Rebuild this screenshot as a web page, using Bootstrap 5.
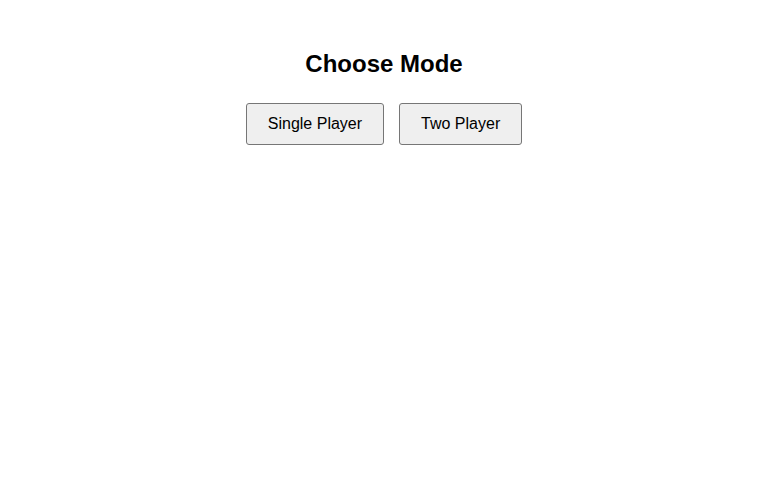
<!DOCTYPE html>
<html lang="en">
<head>
<meta charset="utf-8">
<meta name="viewport" content="width=device-width, initial-scale=1">
<title>Choose Mode</title>
<link href="https://cdn.jsdelivr.net/npm/bootstrap@5.3.0/dist/css/bootstrap.min.css" rel="stylesheet">
<style>
  body {
    font-family: "Liberation Sans", Arial, sans-serif;
    color: #000;
  }
  .mode-screen { padding-top: 50px; }
  .mode-title {
    font-size: 24px;
    line-height: 27px;
    margin-bottom: 26px;
  }
  .mode-options { gap: 15px; }
  .mode-btn {
    --bs-btn-padding-x: 21px;
    --bs-btn-padding-y: 11px;
    --bs-btn-font-size: 16px;
    --bs-btn-line-height: 18px;
    --bs-btn-color: #000;
    --bs-btn-bg: #efefef;
    --bs-btn-border-color: #767676;
    --bs-btn-border-radius: 3px;
    --bs-btn-hover-color: #000;
    --bs-btn-hover-bg: #e5e5e5;
    --bs-btn-hover-border-color: #4f4f4f;
    --bs-btn-active-color: #000;
    --bs-btn-active-bg: #f5f5f5;
    --bs-btn-active-border-color: #8d8d8d;
  }
</style>
</head>
<body class="bg-white">
<main class="mode-screen container text-center">
  <h2 class="mode-title fw-bold">Choose Mode</h2>
  <div class="mode-options d-flex flex-wrap justify-content-center">
    <button type="button" class="btn mode-btn">Single Player</button>
    <button type="button" class="btn mode-btn">Two Player</button>
  </div>
</main>
<script src="https://cdn.jsdelivr.net/npm/bootstrap@5.3.0/dist/js/bootstrap.bundle.min.js"></script>
</body>
</html>
